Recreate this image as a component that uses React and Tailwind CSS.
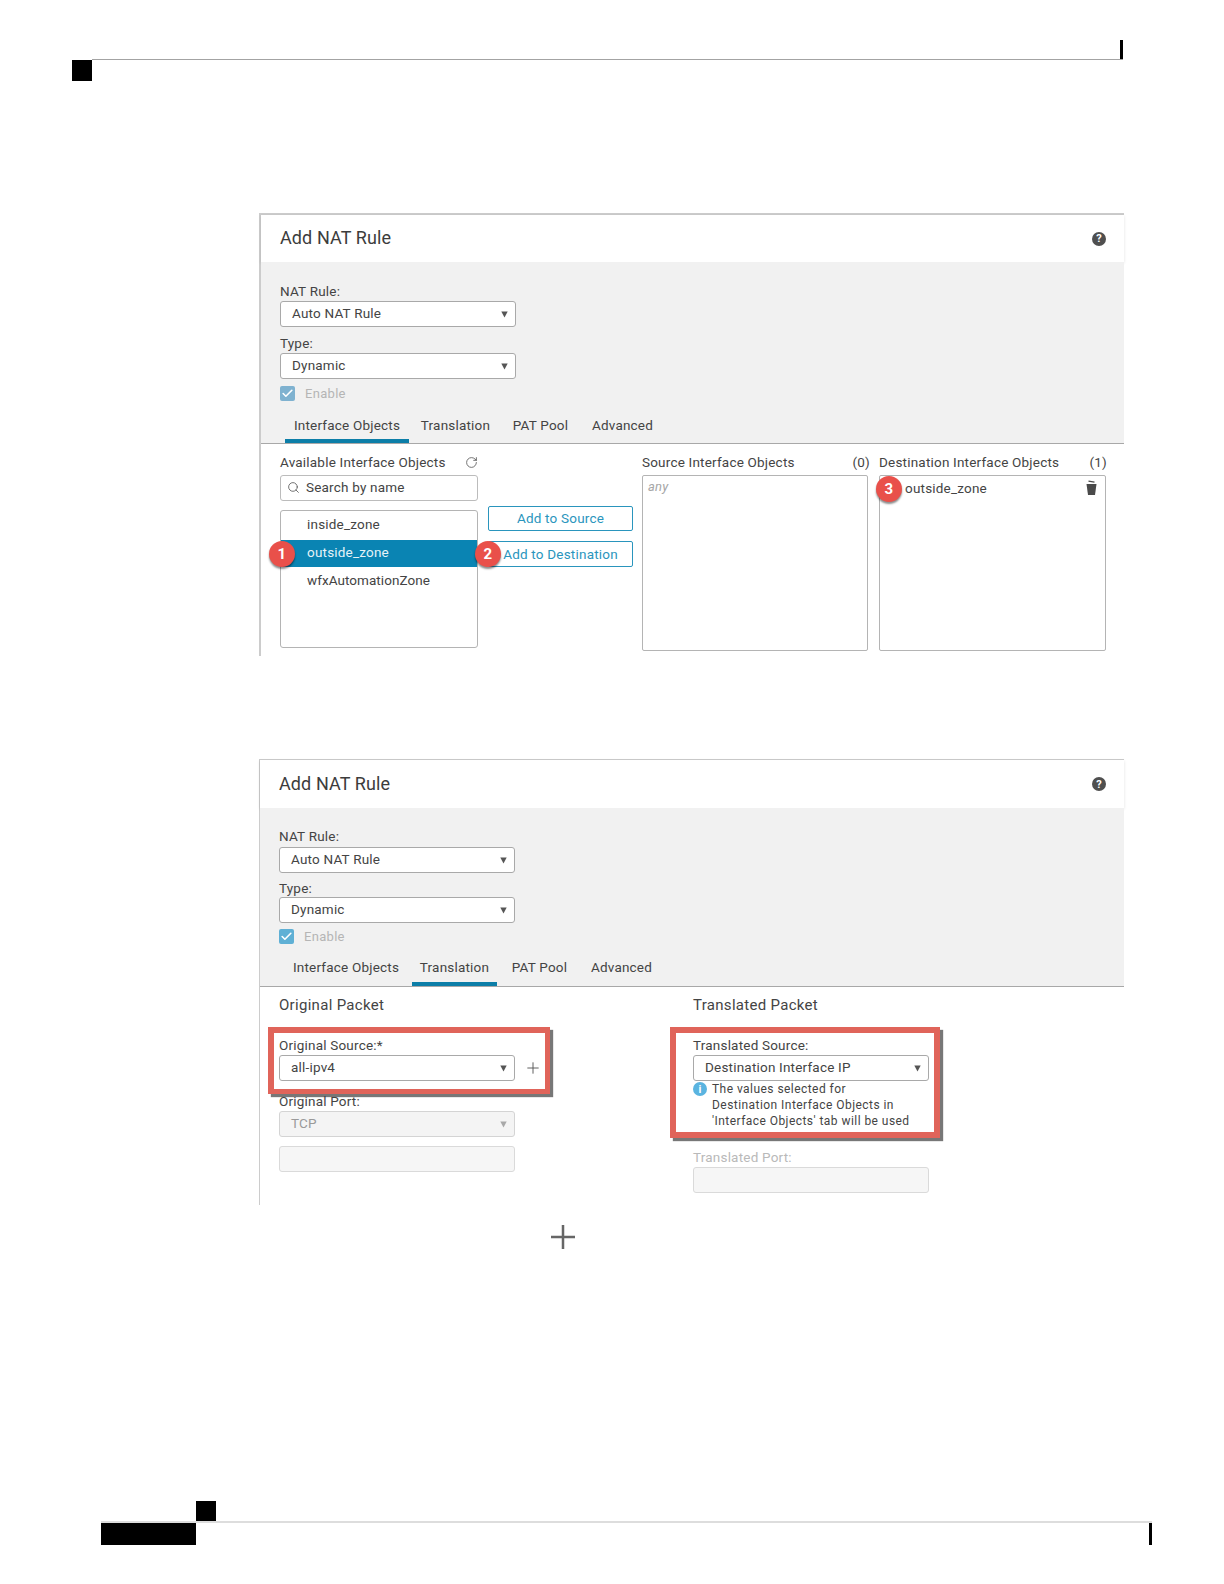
import React from "react";
import { Check, Plus, RotateCw, Search } from "lucide-react";

const font = "font-['Roboto',sans-serif]";

// small down triangle used by the selects
const Caret = ({ muted }) => (
  <svg width="7" height="7" viewBox="0 0 7 7" className="shrink-0">
    <path d="M0.3 0.5h6.4L3.5 6.5z" fill={muted ? "#a8a8a8" : "#555555"} />
  </svg>
);

const Label = ({ children, muted, className = "" }) => (
  <div className={`h-4 text-[13.5px] leading-4 tracking-[0.2px] whitespace-nowrap ${muted ? "text-[#b9b9b9]" : "text-[#444444]"} ${className}`}>
    {children}
  </div>
);

const Select = ({ value, disabled, className = "" }) => (
  <div
    className={`flex h-[26px] w-[236px] items-center justify-between rounded-[3px] border pl-[11px] pr-[7px] text-[13.5px] tracking-[0.2px] ${
      disabled ? "border-[#d4d4d4] bg-[#f4f4f4] text-[#9a9a9a]" : "border-[#a9a9a9] bg-white text-[#444444]"
    } ${className}`}
  >
    <span className="pb-[2px]">{value}</span>
    <Caret muted={disabled} />
  </div>
);

const EmptyInput = ({ className = "" }) => (
  <div className={`h-[26px] w-[236px] rounded-[3px] border border-[#dadada] bg-[#f6f6f6] ${className}`} />
);

const Enable = ({ color, className = "" }) => (
  <div className={`flex h-[15px] items-center gap-[10px] ${className}`}>
    <div className={`flex h-[15px] w-[15px] items-center justify-center rounded-[2px] ${color}`}>
      <Check size={13} strokeWidth={3} color="#ffffff" />
    </div>
    <span className="text-[13px] tracking-[0.3px] text-[#b5b5b5]">Enable</span>
  </div>
);

const tabs = [
  { name: "Interface Objects", width: "w-[124px]" },
  { name: "Translation", width: "w-[85px]" },
  { name: "PAT Pool", width: "w-[77px]" },
  { name: "Advanced", width: "w-[79px]" },
];

const Tabs = ({ active, className = "" }) => (
  <div className={`flex gap-1 border-b border-[#a8a8a8] text-[13.5px] tracking-[0.2px] text-[#444444] ${className}`}>
    {tabs.map((tab) => (
      <div
        key={tab.name}
        className={`flex items-center justify-center whitespace-nowrap ${tab.width} ${
          tab.name === active ? "border-b-4 border-[#0c7ea8]" : "pb-1"
        }`}
      >
        {tab.name}
      </div>
    ))}
  </div>
);

const HelpIcon = () => (
  <div className="flex h-[14px] w-[14px] items-center justify-center rounded-full bg-[#4f4f4f] text-[11px] font-bold leading-none text-white">
    ?
  </div>
);

const Badge = ({ n, className = "" }) => (
  <div
    className={`absolute z-10 flex h-[26px] w-[26px] items-center justify-center rounded-full bg-[#e9504a] text-[15px] font-bold text-white shadow-[0_2px_2px_rgba(0,0,0,0.45)] ${className}`}
  >
    {n}
  </div>
);

const TrashIcon = () => (
  <svg width="11" height="16" viewBox="0 0 11 16">
    <path d="M2.5 1.2 8.5 2.2" stroke="#4a4a4a" strokeWidth="1.2" fill="none" />
    <path d="M0.5 4h10l-1.5 11h-7z" fill="#4a4a4a" />
  </svg>
);

const PanelHeader = ({ className = "" }) => (
  <div className={`flex items-center justify-between pr-[18px] shadow-[0_1px_3px_rgba(0,0,0,0.12)] ${className}`}>
    <span className="pb-[2px] text-[18px] tracking-[0.1px] text-[#3c3c3c]">Add NAT Rule</span>
    <HelpIcon />
  </div>
);

const InterfacePanel = () => (
  <div className="h-[443px] w-[865px] border-l-2 border-t-2 border-[#cccccc]">
    <PanelHeader className="h-[47px] pl-[19px]" />
    <div className="h-[182px] bg-[#f1f1f1] pt-[21px]">
      <div className="pl-[19px]">
        <Label>NAT Rule:</Label>
        <Select value="Auto NAT Rule" className="mt-[2px]" />
        <Label className="mt-2">Type:</Label>
        <Select value="Dynamic" className="mt-[2px]" />
        <Enable color="bg-[#7fb2d0]" className="mt-[7px]" />
      </div>
      <Tabs active="Interface Objects" className="mt-[11px] h-[32px] pl-6" />
    </div>
    <div className="flex pl-[19px] pt-[10px] text-[13.5px] tracking-[0.2px] text-[#444444]">
      <div className="w-[198px]">
        <div className="flex h-4 items-center justify-between">
          <span>Available Interface Objects</span>
          <RotateCw size={13} strokeWidth={1.5} color="#555555" />
        </div>
        <div className="mt-[5px] flex h-[26px] items-center gap-[6px] rounded-[3px] border border-[#bcbcbc] bg-white pb-px pl-[6px]">
          <Search size={13} strokeWidth={1.5} color="#555555" />
          <span>Search by name</span>
        </div>
        <div className="mt-[9px] h-[138px] w-[198px] rounded-[3px] border border-[#b4b4b4] bg-white">
          <div className="flex h-[29px] items-center pb-[2px] pl-[26px]">inside_zone</div>
          <div className="relative flex h-[27px] items-center bg-[#0a84b3] pb-[2px] pl-[26px] text-[#e6f3f8]">
            outside_zone
            <Badge n="1" className="left-[-12px] top-px" />
          </div>
          <div className="flex h-[27px] items-center pl-[26px] tracking-[0.05px]">wfxAutomationZone</div>
        </div>
      </div>
      <div className="ml-[10px] flex w-[145px] flex-col gap-[10px] pt-[52px] text-[#2a95bd]">
        <div className="flex h-[25px] items-center justify-center rounded-[2px] border border-[#2a95bd] bg-white">Add to Source</div>
        <div className="relative flex h-[26px] items-center justify-center rounded-[2px] border border-[#2a95bd] bg-white">
          Add to Destination
          <Badge n="2" className="left-[-14px] top-[-1px]" />
        </div>
      </div>
      <div className="ml-[9px] w-[226px]">
        <div className="flex h-4 items-center justify-between">
          <span>Source Interface Objects</span>
          <span className="-mr-[2px]">(0)</span>
        </div>
        <div className="mt-[5px] h-[176px] rounded-[2px] border border-[#b4b4b4] bg-white pl-[5px] pt-px text-[13px] italic text-[#a6a6a6]">any</div>
      </div>
      <div className="ml-[11px] w-[227px]">
        <div className="flex h-4 items-center justify-between">
          <span>Destination Interface Objects</span>
          <span className="-mr-px">(1)</span>
        </div>
        <div className="relative mt-[5px] flex h-[176px] items-start justify-between rounded-[2px] border border-[#b4b4b4] bg-white pl-[25px] pr-[8px] pt-[2px]">
          <span>outside_zone</span>
          <div className="pt-[2px]">
            <TrashIcon />
          </div>
          <Badge n="3" className="left-[-4px] top-0" />
        </div>
      </div>
    </div>
  </div>
);

const TranslationPanel = () => (
  <div className="mt-[103px] h-[446px] w-[865px] border-l border-t border-[#cccccc]">
    <PanelHeader className="h-[48px] pl-[19px]" />
    <div className="h-[179px] bg-[#f1f1f1] pt-5">
      <div className="pl-[19px]">
        <Label>NAT Rule:</Label>
        <Select value="Auto NAT Rule" className="mt-[3px]" />
        <Label className="mt-[7px]">Type:</Label>
        <Select value="Dynamic" className="mt-px" />
        <Enable color="bg-[#5fb0d5]" className="mt-[6px]" />
      </div>
      <Tabs active="Translation" className="mt-[9px] h-[34px] pl-6" />
    </div>
    <div className="flex pt-[10px] text-[#444444]">
      <div className="ml-2 w-[282px]">
        <div className="ml-[11px] h-4 text-[15px] leading-4 tracking-[0.3px]">Original Packet</div>
        <div className="mt-[14px] h-[67px] border-[6px] border-b-[5px] border-r-[5px] border-[#e0645a] bg-white pl-[5px] pt-1 shadow-[3px_3px_1px_#777777]">
          <Label>Original Source:*</Label>
          <div className="mt-[2px] flex items-center gap-[9px]">
            <Select value="all-ipv4" />
            <Plus size={18} strokeWidth={1.25} color="#555555" />
          </div>
        </div>
        <div className="ml-[11px] -mt-px">
          <Label>Original Port:</Label>
          <Select value="TCP" disabled className="mt-[2px]" />
          <EmptyInput className="mt-[9px]" />
        </div>
      </div>
      <div className="ml-[120px] w-[270px]">
        <div className="ml-[23px] h-4 text-[15px] leading-4 tracking-[0.3px]">Translated Packet</div>
        <div className="mt-[14px] h-[111px] border-[6px] border-[#e0645a] bg-white pl-[17px] pt-1 shadow-[3px_3px_1px_#777777]">
          <Label>Translated Source:</Label>
          <Select value="Destination Interface IP" className="mt-[2px]" />
          <div className="flex gap-[5px] text-[12px] leading-4 tracking-[0.45px]">
            <div className="mt-px flex h-[14px] w-[14px] items-center justify-center rounded-full bg-[#5ab4e0] text-[11px] font-bold leading-none tracking-normal text-white">i</div>
            <div className="whitespace-nowrap">
              <div>The values selected for</div>
              <div>Destination Interface Objects in</div>
              <div>'Interface Objects' tab will be used</div>
            </div>
          </div>
        </div>
        <div className="ml-[23px] mt-[11px]">
          <Label muted>Translated Port:</Label>
          <EmptyInput className="mt-[2px]" />
        </div>
      </div>
    </div>
  </div>
);

const App = () => (
  <div className={`flex h-[1584px] w-[1224px] flex-col bg-white ${font}`}>
    {/* Page header marks */}
    <div className="ml-[92px] mt-10 flex h-5 w-[1031px] justify-end border-b border-[#a3a3a3]">
      <div className="h-[19px] w-[3px] bg-black" />
    </div>
    <div className="ml-[72px] h-[21px] w-5 bg-black" />

    <div className="ml-[259px] mt-[132px]">
      <InterfacePanel />
      <TranslationPanel />
    </div>

    <svg width="26" height="26" viewBox="0 0 26 26" className="ml-[550px] mt-[19px]">
      <path d="M13 1v24M1 13h24" stroke="#666666" strokeWidth="2.5" fill="none" />
    </svg>

    {/* Page footer marks */}
    <div className="ml-[196px] mt-auto h-5 w-5 bg-black" />
    <div className="mb-[39px] ml-[101px] flex w-[1051px] justify-between border-t-2 border-[#dddddd]">
      <div className="h-[22px] w-[95px] bg-black" />
      <div className="h-[22px] w-[3px] bg-black" />
    </div>
  </div>
);

export default App;
